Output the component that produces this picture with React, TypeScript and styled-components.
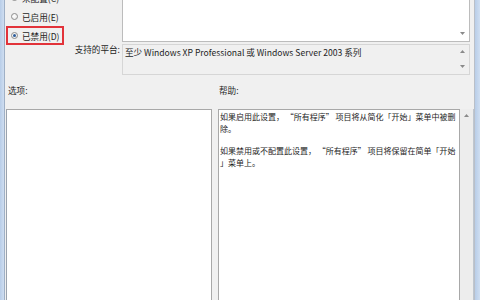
import React from 'react';
import styled, { createGlobalStyle } from 'styled-components';

const Global = createGlobalStyle`
  html, body { margin: 0; padding: 0; width: 480px; height: 300px; overflow: hidden; background: #f0f0f0; }
  #root { width: 480px; height: 300px; }
`;

const Window = styled.div`
  display: flex;
  width: 480px;
  height: 300px;
  overflow: hidden;
  background: #f0f0f0;
  font-family: "Noto Sans CJK SC", "Noto Sans", sans-serif;
  font-size: 8.6px;
  color: #1e1e1e;
`;

const Frame = styled.div<{ $side: 'left' | 'right' }>`
  flex: none;
  width: ${(p) => (p.$side === 'left' ? 4 : 5)}px;
  background: linear-gradient(to right, #b8cde8, #cfdef1);
  ${(p) => (p.$side === 'left' ? 'border-right: 1px solid #9fb0c6;' : 'border-left: 1px solid #b9bfc8;')}
`;

const Content = styled.div`
  flex: 1;
  min-width: 0;
  display: flex;
  flex-direction: column;
`;

const Top = styled.div`
  display: grid;
  grid-template-columns: 117px 1fr;
  grid-template-rows: 54px 31px;
  row-gap: 2px;
  margin-top: -12px;
  margin-right: 4px;
`;

const RadioGroup = styled.div`
  display: flex;
  flex-direction: column;
  align-items: flex-start;
  padding-left: 1px;
`;

const RadioRow = styled.div<{ $highlight?: boolean }>`
  flex: none;
  display: inline-flex;
  align-items: center;
  height: 15px;
  padding: 0 2px 0 3px;
  border: 2px solid ${(p) => (p.$highlight ? '#e2333a' : 'transparent')};
`;

const RadioCircle = styled.span<{ $checked?: boolean }>`
  position: relative;
  flex: none;
  width: 7px;
  height: 7px;
  border-radius: 50%;
  border: 1px solid #8d8d8d;
  background: radial-gradient(circle at 40% 40%, #ffffff, #e4e4e4);
  box-sizing: border-box;
  margin-right: 4px;
  &::after {
    content: '';
    display: ${(p) => (p.$checked ? 'block' : 'none')};
    position: absolute;
    left: 1px;
    top: 1px;
    width: 3px;
    height: 3px;
    border-radius: 50%;
    background: #2b5c99;
  }
`;

const Label = styled.span`
  white-space: nowrap;
  line-height: 12px;
`;

const PlatformLabel = styled.div`
  text-align: right;
  padding-right: 2px;
  line-height: 10px;
  white-space: nowrap;
`;

const Box = styled.div<{ $bg: string }>`
  display: flex;
  min-width: 0;
  background: ${(p) => p.$bg};
  border: 1px solid ${(p) => (p.$bg === '#ffffff' ? '#bcbcbc' : '#d6d6d6')};
`;

const BoxText = styled.div`
  flex: 1;
  min-width: 0;
  padding: 2px 2px;
  line-height: 11px;
  white-space: nowrap;
`;

const ScrollCol = styled.div<{ $justify: string }>`
  flex: none;
  width: 14px;
  display: flex;
  flex-direction: column;
  align-items: center;
  justify-content: ${(p) => p.$justify};
  padding: 5px 0 6px;
  box-sizing: border-box;
`;

const Arrow = ({ up }: { up?: boolean }) => (
  <svg width="5" height="3" viewBox="0 0 5 3">
    <path d={up ? 'M0 3 L2.5 0 L5 3 Z' : 'M0 0 L5 0 L2.5 3 Z'} fill="#8a8a8a" />
  </svg>
);

const Bottom = styled.div`
  flex: 1;
  display: grid;
  grid-template-columns: 206px 1fr;
  column-gap: 6px;
  padding-left: 1px;
`;

const Column = styled.div`
  display: flex;
  flex-direction: column;
  min-width: 0;
`;

const SectionLabel = styled.div<{ $indent: number }>`
  height: 34px;
  box-sizing: border-box;
  padding-top: 9px;
  padding-left: ${(p) => p.$indent}px;
  line-height: 12px;
`;

const ListBox = styled.div`
  flex: 1;
  background: #ffffff;
  border: 1px solid #a8a8a8;
  border-bottom: none;
  border-left-color: #9aa3ae;
`;

const HelpWrap = styled.div`
  flex: 1;
  display: flex;
  border-right: 1px solid #bfc6cf;
`;

const HelpText = styled.div`
  flex: 1;
  min-width: 0;
  overflow: hidden;
  background: #ffffff;
  border: 1px solid #a8a8a8;
  border-bottom: none;
  padding: 1px 1px;
  font-size: 8px;
  line-height: 12px;
`;

const Para = styled.p`
  margin: 0 0 10px;
  white-space: nowrap;
`;

const HelpScroll = styled.div`
  flex: none;
  width: 13px;
  background: #ededed;
  display: flex;
  flex-direction: column;
  align-items: center;
  padding-top: 5px;
`;

export default function App() {
  return (
    <>
      <Global />
      <Window>
        <Frame $side="left" />
        <Content>
          <Top>
            <RadioGroup>
              <RadioRow>
                <RadioCircle />
                <Label>未配置(C)</Label>
              </RadioRow>
              <RadioRow>
                <RadioCircle />
                <Label>已启用(E)</Label>
              </RadioRow>
              <RadioRow $highlight>
                <RadioCircle $checked />
                <Label>已禁用(D)</Label>
              </RadioRow>
            </RadioGroup>
            <Box $bg="#ffffff">
              <BoxText />
              <ScrollCol $justify="flex-end">
                <Arrow />
              </ScrollCol>
            </Box>
            <PlatformLabel>支持的平台:</PlatformLabel>
            <Box $bg="#f0f0f0">
              <BoxText>至少 Windows XP Professional 或 Windows Server 2003 系列</BoxText>
              <ScrollCol $justify="space-between">
                <Arrow up />
                <Arrow />
              </ScrollCol>
            </Box>
          </Top>
          <Bottom>
            <Column>
              <SectionLabel $indent={2}>选项:</SectionLabel>
              <ListBox />
            </Column>
            <Column>
              <SectionLabel $indent={1}>帮助:</SectionLabel>
              <HelpWrap>
                <HelpText>
                  <Para>
                    如果启用此设置， “所有程序” 项目将从简化「开始」菜单中被删
                    <br />
                    除。
                  </Para>
                  <Para>
                    如果禁用或不配置此设置， “所有程序” 项目将保留在简单「开始
                    <br />
                    」菜单上。
                  </Para>
                </HelpText>
                <HelpScroll>
                  <Arrow up />
                </HelpScroll>
              </HelpWrap>
            </Column>
          </Bottom>
        </Content>
        <Frame $side="right" />
      </Window>
    </>
  );
}
